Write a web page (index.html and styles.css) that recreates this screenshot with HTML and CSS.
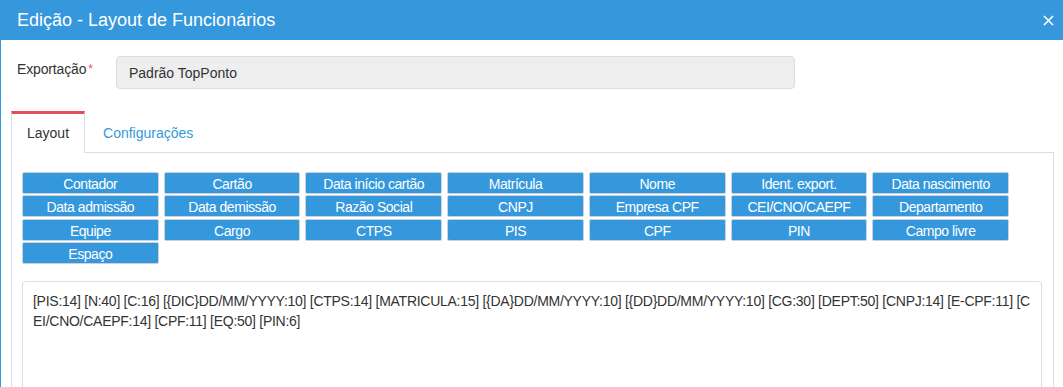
FILE: index.html
```html
<!DOCTYPE html>
<html lang="pt-BR">
<head>
    <meta charset="UTF-8">
    <meta name="viewport" content="width=device-width, initial-scale=1.0">
    <title>Edição - Layout de Funcionários</title>
    <link rel="stylesheet" href="styles.css">
</head>
<body>
    <div class="modal">
        <div class="modal-header">
            <h1>Edição - Layout de Funcionários</h1>
            <button class="close" aria-label="Fechar">
                <svg width="11" height="11" viewBox="0 0 11 11">
                    <path d="M1 1 L10 10 M10 1 L1 10" stroke="#fff" stroke-width="1.6" fill="none"/>
                </svg>
            </button>
        </div>

        <div class="modal-body">
            <div class="form-row">
                <label for="exportacao">Exportação<span class="req">*</span></label>
                <input type="text" id="exportacao" value="Padrão TopPonto" readonly>
            </div>

            <ul class="tabs">
                <li class="active"><a href="#">Layout</a></li>
                <li><a href="#">Configurações</a></li>
            </ul>

            <div class="tab-content">
                <div class="fields">
                    <button>Contador</button>
                    <button>Cartão</button>
                    <button>Data início cartão</button>
                    <button>Matrícula</button>
                    <button>Nome</button>
                    <button>Ident. export.</button>
                    <button>Data nascimento</button>
                    <button>Data admissão</button>
                    <button>Data demissão</button>
                    <button>Razão Social</button>
                    <button>CNPJ</button>
                    <button>Empresa CPF</button>
                    <button>CEI/CNO/CAEPF</button>
                    <button>Departamento</button>
                    <button>Equipe</button>
                    <button>Cargo</button>
                    <button>CTPS</button>
                    <button>PIS</button>
                    <button>CPF</button>
                    <button>PIN</button>
                    <button>Campo livre</button>
                    <button>Espaço</button>
                </div>

                <textarea class="layout-text">[PIS:14] [N:40] [C:16] [{DIC}DD/MM/YYYY:10] [CTPS:14] [MATRICULA:15] [{DA}DD/MM/YYYY:10] [{DD}DD/MM/YYYY:10] [CG:30] [DEPT:50] [CNPJ:14] [E-CPF:11] [CEI/CNO/CAEPF:14] [CPF:11] [EQ:50] [PIN:6]</textarea>
            </div>
        </div>
    </div>
</body>
</html>
```

FILE: styles.css
```css
body {
    margin: 0;
    font-family: 'Liberation Sans', Arial, sans-serif;
    font-size: 14px;
    color: #333;
    background: #fff;
}

.modal {
    width: 1063px;
    height: 387px;
    overflow: hidden;
    border-left: 1px solid #3598dc;
    box-sizing: border-box;
}

.modal-header {
    height: 40px;
    background-color: #3598dc;
    display: flex;
    align-items: center;
    justify-content: space-between;
    padding: 0 9px 0 16px;
}

.modal-header h1 {
    margin: 0;
    font-size: 18px;
    font-weight: normal;
    color: #fff;
}

.close {
    background: none;
    border: none;
    padding: 0;
    width: 11px;
    height: 11px;
    display: flex;
    cursor: pointer;
}

.modal-body {
    padding: 16px 9px 0 10px;
}

.form-row {
    display: flex;
    align-items: flex-start;
    padding-left: 6px;
}

.form-row label {
    width: 99px;
    padding-top: 5px;
    flex-shrink: 0;
    letter-spacing: -0.15px;
}

.req {
    color: #e7505a;
    font-size: 12px;
    margin-left: 2px;
    vertical-align: top;
    position: relative;
    top: 1px;
}

.form-row input {
    width: 679px;
    height: 33px;
    box-sizing: border-box;
    border: 1px solid #ddd;
    border-radius: 4px;
    background-color: #eee;
    padding: 0 12px;
    font-family: inherit;
    font-size: 14px;
    color: #333;
    outline: none;
}

.tabs {
    list-style: none;
    margin: 22px 0 0 0;
    padding: 0;
    display: flex;
    border-bottom: 1px solid #ddd;
}

.tabs li {
    margin-bottom: -1px;
    margin-right: 2px;
}

.tabs a {
    display: block;
    line-height: 38px;
    padding: 0 15px;
    border: 1px solid transparent;
    border-top: 3px solid transparent;
    color: #3598dc;
    text-decoration: none;
}

.tabs li.active a {
    color: #333;
    border-color: #ddd;
    border-top-color: #e7505a;
    border-bottom-color: #fff;
}

.tab-content {
    border-left: 1px solid #ddd;
    border-right: 1px solid #ddd;
    padding: 19px 10px 0 10px;
    height: 300px;
}

.fields {
    display: grid;
    grid-template-columns: repeat(7, 1fr);
    column-gap: 5px;
    row-gap: 1.33px;
    width: 987px;
}

.fields button {
    height: 22px;
    padding: 0;
    background-color: #3598dc;
    color: #fff;
    border: 1px solid #c9d2da;
    border-radius: 2px;
    font-family: inherit;
    font-size: 14px;
    letter-spacing: -0.45px;
    line-height: 22px;
    cursor: pointer;
}

.layout-text {
    display: block;
    margin-top: 17px;
    width: 1020px;
    height: 130px;
    box-sizing: border-box;
    border: 1px solid #ddd;
    border-radius: 4px;
    padding: 9px 10px;
    font-family: inherit;
    font-size: 14px;
    letter-spacing: -0.27px;
    line-height: 20px;
    color: #333;
    resize: none;
    word-break: break-all;
    overflow: hidden;
    outline: none;
}
```
